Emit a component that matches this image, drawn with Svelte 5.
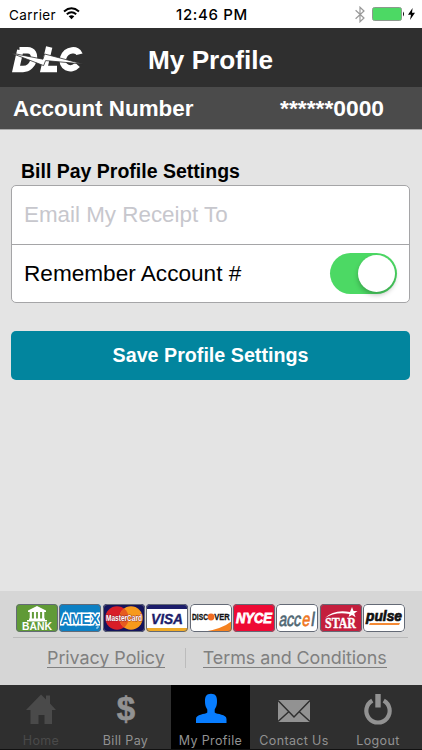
<script>
    let email = '';
    let remember = true;

    const tabs = [
        { id: 'home', label: 'Home', disabled: true },
        { id: 'pay', label: 'Bill Pay' },
        { id: 'profile', label: 'My Profile' },
        { id: 'contact', label: 'Contact Us' },
        { id: 'logout', label: 'Logout' }
    ];
    let activeTab = 'profile';

    const cards = ['bank', 'amex', 'mastercard', 'visa', 'discover', 'nyce', 'accel', 'star', 'pulse'];
</script>

<main>
    <div class="status">
        <div class="carrier">
            <span>Carrier</span>
            <svg width="17" height="13" viewBox="0 0 17 13">
                <g fill="none" stroke="#000" stroke-width="2">
                    <path d="M1 4.4Q8.5 -2 16 4.4" />
                    <path d="M3.8 7.3Q8.5 3.3 13.2 7.3" />
                </g>
                <path d="M5.7 9.3Q8.5 7 11.3 9.3L8.5 12.2Z" />
            </svg>
        </div>
        <div class="time">12:46 PM</div>
        <div class="power">
            <svg width="10" height="17" viewBox="0 0 10 17" fill="none" stroke="#999" stroke-width="1.2">
                <path d="M.6 4.3L9 12L5 15.8V1.2L9 5L.6 12.7" />
            </svg>
            <svg class="battery" width="33" height="14" viewBox="0 0 33 14">
                <rect x=".5" y=".5" width="29" height="13" rx="2" fill="#4cd964" stroke="#8b9a8d" />
                <path d="M31 4.5Q33 7 31 9.5Z" />
            </svg>
            <svg width="7" height="12" viewBox="0 0 7 12"><path d="M4.6 0L0 6.8H3L2 12L7 4.8H4Z" /></svg>
        </div>
    </div>

    <header>
        <svg class="logo" width="71" height="28" viewBox="0 0 71 28">
            <g fill="none" stroke="#fff" stroke-width="6.4">
                <path d="M7.5 5.2H15.5C26.5 5.2 22.5 24 11 24H4L8.3 5.2" />
                <path d="M37.2 2L32 24H45" />
                <path d="M67.5 9.2C66 3.4 54.5 3.6 51.3 12.5C48 22 59 27 65.5 19.8" />
            </g>
            <path d="M-1 8L31 14.2L32.6 9L71 19L33.6 15.6L31.6 20.6Z" fill="#fff" stroke="#2f2f2f" stroke-width=".8" />
        </svg>
        <h1>My Profile</h1>
    </header>

    <div class="account">
        <span>Account Number</span>
        <span class="number">******0000</span>
    </div>

    <section class="content">
        <h2>Bill Pay Profile Settings</h2>
        <div class="panel">
            <div class="row">
                <input type="email" placeholder="Email My Receipt To" bind:value={email} />
            </div>
            <div class="row remember">
                <span>Remember Account #</span>
                <button
                    class="switch"
                    class:on={remember}
                    role="switch"
                    aria-checked={remember}
                    aria-label="Remember Account #"
                    on:click={() => (remember = !remember)}
                ><i></i></button>
            </div>
        </div>
        <button class="save">Save Profile Settings</button>
    </section>

    <footer>
        <div class="cards">
            {#each cards as card}
                <svg class="card" viewBox="0 0 42 28">
                    {#if card === 'bank'}
                        <rect width="42" height="28" fill="#609a36" />
                        <path d="M12 6.5L21 2L30 6.5V8H12ZM13 14.5H29V16H31V17.5H11V16H13Z" fill="#fff" />
                        <path d="M14.8 8V15M19 8V15M23 8V15M27.2 8V15" stroke="#fff" stroke-width="2.2" />
                        <text x="6" y="26.3" font-size="11" textLength="30" lengthAdjust="spacingAndGlyphs" fill="#fff">BANK</text>
                    {:else if card === 'amex'}
                        <rect width="42" height="28" fill="#0c80c4" />
                        <text x="1.5" y="19.7" font-size="14.5" textLength="39" lengthAdjust="spacingAndGlyphs" fill="#0c80c4" stroke="#fff" stroke-width="3" paint-order="stroke">AMEX</text>
                        <path d="M36.5 21.5H39V24H37" stroke="#b5d9ee" fill="none" />
                    {:else if card === 'mastercard'}
                        <rect width="42" height="28" fill="#14145c" />
                        <circle cx="14" cy="14" r="11.7" fill="#d81e28" />
                        <circle cx="28" cy="14" r="11.7" fill="#f79a1c" />
                        <path d="M21 4.6A11.7 11.7 0 0 1 21 23.4A11.7 11.7 0 0 1 21 4.6" fill="#e65b20" />
                        <text x="3" y="17" font-size="8.5" textLength="36" lengthAdjust="spacingAndGlyphs" fill="#fff" stroke="#8e2330" stroke-width=".8" paint-order="stroke">MasterCard</text>
                    {:else if card === 'visa'}
                        <rect width="42" height="28" fill="#fff" />
                        <rect width="42" height="5" fill="#1c1d6a" />
                        <rect y="24" width="42" height="4" fill="#efaa26" />
                        <text x="5" y="20.2" font-size="15.5" font-style="italic" textLength="32" lengthAdjust="spacingAndGlyphs" fill="#1c1d6a" stroke="#1c1d6a" stroke-width=".4">VISA</text>
                    {:else if card === 'discover'}
                        <rect width="42" height="28" fill="#fff" />
                        <path d="M13 28Q32 25 42 17V28Z" fill="#f58220" />
                        <text x="2" y="16" font-size="8.8" textLength="16" lengthAdjust="spacingAndGlyphs" fill="#111" stroke="#111" stroke-width=".3">DISC</text>
                        <circle cx="21" cy="13" r="3.4" fill="#ef6b23" />
                        <text x="24.3" y="16" font-size="8.8" textLength="15.5" lengthAdjust="spacingAndGlyphs" fill="#111" stroke="#111" stroke-width=".3">VER</text>
                    {:else if card === 'nyce'}
                        <rect width="42" height="28" fill="#ee0a34" />
                        <text x="3" y="19" font-size="13.8" font-style="italic" textLength="36" lengthAdjust="spacingAndGlyphs" fill="#fff" stroke="#fff" stroke-width=".8">NYCE</text>
                    {:else if card === 'accel'}
                        <rect width="42" height="28" fill="#fff" />
                        <g font-size="19.5" font-weight="400" stroke-width=".7" transform="skewX(-8)">
                            <text x="5.5" y="22" textLength="22" lengthAdjust="spacingAndGlyphs" fill="#4f6672" stroke="#4f6672">acc</text>
                            <text x="28.5" y="22" textLength="8" lengthAdjust="spacingAndGlyphs" fill="#ef7622" stroke="#ef7622">e</text>
                            <text x="37.5" y="22" textLength="3.5" lengthAdjust="spacingAndGlyphs" fill="#4f6672" stroke="#4f6672">l</text>
                        </g>
                    {:else if card === 'star'}
                        <rect width="42" height="28" fill="#c41e3d" />
                        <text class="serif" x="5" y="24" font-size="15.5" textLength="31" lengthAdjust="spacingAndGlyphs" fill="#fff" stroke="#fff" stroke-width=".4">STAR</text>
                        <path d="M5 14Q14 5 30 8L32 3L33.5 7L37.5 7L34.2 9.4L35.6 13.2L32 11L28.6 13L29.5 10Q15 7.5 5 14Z" fill="#fff" />
                    {:else}
                        <rect width="42" height="28" fill="#fff" />
                        <path d="M7 19H37L36 21H6Z" fill="#f58a35" />
                        <text x="3" y="17" font-size="14.5" font-style="italic" textLength="36" lengthAdjust="spacingAndGlyphs" fill="#111" stroke="#111" stroke-width=".7">pulse</text>
                    {/if}
                    <rect x=".5" y=".5" width="41" height="27" rx="3.5" fill="none" stroke="#646a76" />
                </svg>
            {/each}
        </div>
        <div class="links">
            <a href="#privacy">Privacy Policy</a>
            <span class="divider"></span>
            <a href="#terms">Terms and Conditions</a>
        </div>
    </footer>

    <nav>
        {#each tabs as tab}
            <button class="tab {tab.id}" class:active={tab.id === activeTab} disabled={tab.disabled} on:click={() => (activeTab = tab.id)}>
                <svg width="36" height="32" viewBox="0 0 36 32" fill="currentColor">
                    {#if tab.id === 'home'}
                        <path d="M3 17L18 1.5L23 6.5V2.5H27V10.5L33 17H29V31H21.5V22H15.5V31H7.5V17Z" />
                    {:else if tab.id === 'pay'}
                        <text x="18" y="26.5" font-size="33" text-anchor="middle" stroke="currentColor" stroke-width=".6">$</text>
                    {:else if tab.id === 'profile'}
                        <path d="M18 .8C13.5 .8 11.8 3.5 12 8.5C12 13 13.3 14.5 14.3 16.5V19.5C12 21.5 3 21 3 26V30H33.5V26C33.5 21 24 21.5 21.7 19.5V16.5C22.7 14.5 24 13 24 8.5C24.2 3.5 22.5 .8 18 .8Z" />
                    {:else if tab.id === 'contact'}
                        <rect x="2" y="7" width="32" height="22" />
                        <path d="M2 7.5L18 24L34 7.5M2 28.5L13 18.5M34 28.5L23 18.5" fill="none" stroke="#2f2f2f" stroke-width="1.5" />
                    {:else}
                        <path d="M12.3 7.6A11.7 11.7 0 1 0 23.7 7.6" fill="none" stroke="currentColor" stroke-width="4.2" />
                        <rect x="15.3" y="1" width="5.4" height="13.5" />
                    {/if}
                </svg>
                <span>{tab.label}</span>
            </button>
        {/each}
    </nav>
</main>

<style>
    :global(body) {
        background: #e4e4e4;
    }

    main {
        height: 750px;
        display: flex;
        flex-direction: column;
        font-family: "Liberation Sans", Arial, sans-serif;
        background: #e4e4e4;
        overflow: hidden;
    }

    button,
    input {
        font-family: inherit;
        border: 0;
        padding: 0;
        margin: 0;
    }

    .status {
        height: 28px;
        box-sizing: border-box;
        padding: 0 7px 0 9px;
        background: #fff;
        display: grid;
        grid-template-columns: 1fr auto 1fr;
        align-items: center;
        font-family: Inter, sans-serif;
        font-size: 13.5px;
        line-height: 18px;
    }

    .carrier,
    .power {
        display: flex;
        align-items: center;
        gap: 7px;
    }

    .carrier span {
        letter-spacing: 0.4px;
        padding-top: 1px;
    }

    .carrier svg {
        margin-top: -1px;
    }

    .time {
        font-weight: 500;
        font-size: 15px;
        letter-spacing: 0.65px;
        padding-top: 1px;
    }

    .power {
        justify-content: flex-end;
    }

    .power .battery {
        margin-right: -4px;
    }

    header {
        height: 59px;
        background: #2f2f2f;
        display: grid;
        grid-template-columns: 148px 1fr;
        align-items: center;
    }

    .logo {
        margin: 3px 0 0 12px;
    }

    h1 {
        margin: 5px 0 0;
        color: #fff;
        font-size: 26.2px;
        line-height: 30px;
    }

    .account {
        height: 43px;
        box-sizing: border-box;
        padding: 1px 38px 0 13px;
        background: #4b4b4b;
        border-bottom: 1px solid #a9a9a9;
        display: flex;
        justify-content: space-between;
        align-items: center;
        color: #fff;
        font-size: 22.4px;
        font-weight: bold;
    }

    .number {
        font-size: 22.8px;
    }

    .content {
        flex: 1;
        padding: 30px 12px 0 11px;
    }

    h2 {
        margin: 0 0 3px 10px;
        font-size: 19.5px;
        line-height: 22px;
    }

    .panel {
        background: #fff;
        border: 1px solid #a5a5a7;
        border-radius: 5px;
    }

    .row {
        height: 58px;
        padding: 0 12px;
        display: flex;
        align-items: center;
        font-size: 22.6px;
    }

    .row input {
        width: 100%;
        font-size: 22.4px;
        outline: none;
        background: none;
    }

    .row input::placeholder {
        color: #c7c7cd;
    }

    .remember {
        border-top: 1px solid #a5a5a7;
        justify-content: space-between;
        height: 57px;
    }

    .switch {
        width: 67px;
        height: 41px;
        border-radius: 21px;
        background: #d5d5d5;
        display: flex;
        align-items: center;
        padding: 0 2px;
    }

    .switch.on {
        background: #4cd964;
        justify-content: flex-end;
    }

    .switch i {
        width: 37px;
        height: 37px;
        border-radius: 50%;
        background: #fff;
        box-shadow: 0 3px 5px rgba(0, 0, 0, 0.25);
    }

    .save {
        width: 100%;
        height: 49px;
        margin-top: 28px;
        border-radius: 5px;
        background: #02859e;
        color: #fff;
        font-size: 19.7px;
        font-weight: bold;
    }

    footer {
        height: 94px;
        box-sizing: border-box;
        padding: 13px 14px 0 13px;
        background: #d6d6d6;
    }

    .cards {
        display: flex;
        justify-content: space-between;
        padding: 0 3px 5px 3px;
        border-bottom: 1px solid #bbb;
    }

    .card {
        width: 42px;
        height: 28px;
        border-radius: 4px;
        font-family: "Liberation Sans", Arial, sans-serif;
        font-weight: bold;
    }

    .serif {
        font-family: "Liberation Serif", serif;
    }

    .links {
        display: flex;
        align-items: center;
        padding: 9px 0 0 34px;
        font-family: Inter, sans-serif;
        font-size: 17.9px;
        letter-spacing: -0.05px;
        line-height: 22px;
    }

    .links a {
        color: #808080;
        text-decoration: none;
        border-bottom: 1px solid #808080;
        height: 20px;
        line-height: 22px;
        white-space: nowrap;
    }

    .divider {
        width: 1px;
        height: 20px;
        margin: 0 17px 0 20px;
        background: #bcbcbc;
    }

    nav {
        height: 65px;
        background: #2f2f2f;
        display: grid;
        grid-template-columns: 82px 89px 79px 88px 84px;
        border-bottom: 1px solid #111;
        box-sizing: border-box;
    }

    .tab {
        background: none;
        color: #929292;
        display: flex;
        flex-direction: column;
        align-items: center;
        padding-top: 8px;
        font-family: Inter, sans-serif;
        font-size: 12.5px;
        line-height: 16px;
        letter-spacing: 0.35px;
        white-space: nowrap;
    }

    .tab svg {
        font-family: "Liberation Sans", Arial, sans-serif;
        font-weight: bold;
        letter-spacing: 0;
        margin-bottom: 8px;
        flex: none;
        overflow: visible;
    }

    .tab.pay {
        padding-right: 2px;
    }

    .tab.logout {
        padding-right: 4px;
    }

    .tab:disabled {
        color: #4a4a4a;
    }

    .tab.active {
        background: #000;
    }

    .tab.active svg {
        color: #087dff;
    }
</style>
